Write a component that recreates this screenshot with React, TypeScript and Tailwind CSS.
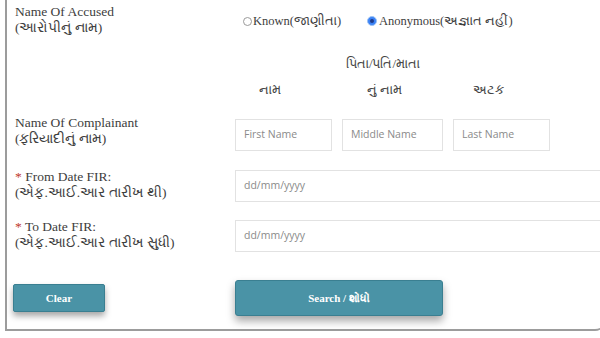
import React from "react";

const serif = { fontFamily: '"Liberation Serif", "Noto Sans", serif' };

function Label({ lines, star }: { lines: string[]; star?: boolean }) {
  return (
    <div className="w-[228px] shrink-0 pl-[8px] text-[13.5px] leading-[16px] text-[#3d3d3d]">
      <div>
        {star && <span className="text-[#c0392b]">* </span>}
        {lines[0]}
      </div>
      <div>{lines[1]}</div>
    </div>
  );
}

function Input({ ph, w }: { ph: string; w: string }) {
  return (
    <div
      className={`${w} h-[32px] border border-[#e2e2e2] flex items-center px-[8px] text-[10.5px] text-[#8a8a8a] bg-white shrink-0`}
      style={{ fontFamily: '"Open Sans", "Noto Sans", sans-serif' }}
    >
      {ph}
    </div>
  );
}

export default function App() {
  return (
    <div className="w-[600px] h-[338px] bg-white overflow-hidden" style={serif}>
      <div className="ml-[5px] w-[600px] h-[331px] border-l-2 border-b-2 border-[#9c9c9c] rounded-br-[10px] flex flex-col">
        {/* Accused */}
        <div className="flex pt-[4px] h-[52px] shrink-0">
          <Label lines={["Name Of Accused", "(આરોપીનું નામ)"]} />
          <div className="flex items-center ml-[8px] mt-[8px] h-[18px] text-[12.5px] text-[#3d3d3d]">
            <div className="flex items-center gap-[1px] w-[124px]">
              <span className="w-[9px] h-[9px] rounded-full border border-[#9a9a9a] bg-white shrink-0" />
              <span>Known(જાણીતા)</span>
            </div>
            <div className="flex items-center gap-[2px]">
              <span className="w-[10px] h-[10px] rounded-full bg-[#3b82f6] border border-[#9cc3f5] flex items-center justify-center shrink-0">
                <span className="w-[4px] h-[4px] rounded-full bg-[#1e3a8a]" />
              </span>
              <span>Anonymous(અજ્ઞાત નહીં)</span>
            </div>
          </div>
        </div>

        {/* Column headings */}
        <div className="flex h-[63px] shrink-0 text-[13px] leading-[18px] text-[#444]">
          <div className="w-[228px] shrink-0" />
          <div className="flex flex-col">
            <div className="mt-[3px] h-[18px] w-[296px] text-center">પિતા/પતિ/માતા</div>
            <div className="flex mt-[8px]">
              <div className="w-[107px] pl-[24px]">નામ</div>
              <div className="w-[111px] pl-[25px]">નું નામ</div>
              <div className="pl-[20px]">અટક</div>
            </div>
          </div>
        </div>

        {/* Complainant */}
        <div className="flex items-start h-[54px] shrink-0">
          <Label lines={["Name Of Complainant", "(ફરિયાદીનું નામ)"]} />
          <div className="flex gap-[10px] mt-[4px]">
            <Input ph="First Name" w="w-[97px]" />
            <Input ph="Middle Name" w="w-[101px]" />
            <Input ph="Last Name" w="w-[97px]" />
          </div>
        </div>

        {/* From date */}
        <div className="flex items-start h-[50px] shrink-0">
          <Label star lines={["From Date FIR:", "(એફ.આઈ.આર તારીખ થી)"]} />
          <div className="mt-[1px]">
            <Input ph="dd/mm/yyyy" w="w-[380px]" />
          </div>
        </div>

        {/* To date */}
        <div className="flex items-start h-[60px] shrink-0">
          <Label star lines={["To Date FIR:", "(એફ.આઈ.આર તારીખ સુધી)"]} />
          <div className="mt-[1px]">
            <Input ph="dd/mm/yyyy" w="w-[380px]" />
          </div>
        </div>

        {/* Buttons */}
        <div className="flex items-center h-[38px] shrink-0">
          <div className="w-[228px] shrink-0 pl-[6px]">
            <button className="w-[92px] h-[28px] bg-[#4a93a6] text-white text-[11px] font-bold rounded-[2px] shadow-[0_4px_6px_rgba(0,0,0,0.35)] border border-[#3a7f91]">
              Clear
            </button>
          </div>
          <button className="w-[208px] h-[36px] bg-[#4a93a6] text-white text-[11px] font-bold rounded-[3px] shadow-[0_5px_8px_rgba(0,0,0,0.35)] border border-[#3a7f91]">
            Search / શોધો
          </button>
        </div>
      </div>
    </div>
  );
}
